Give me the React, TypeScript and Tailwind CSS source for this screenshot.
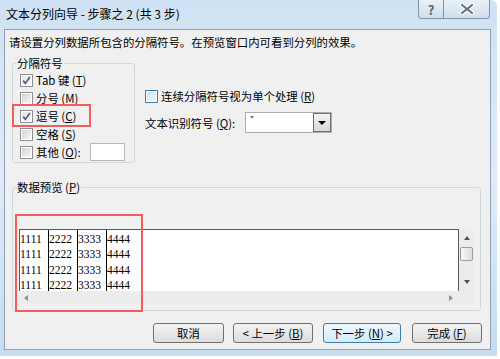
import React from 'react';

const Check = ({ checked, hot }: { checked?: boolean; hot?: boolean }) => (
  <span
    className={`w-[13px] h-[13px] shrink-0 border bg-white p-[1px] flex ${
      hot ? 'border-[#3c7fb1]' : 'border-[#8e8f8f]'
    }`}
  >
    <span
      className={`flex-1 flex items-center justify-center ${
        hot
          ? 'bg-linear-to-br from-[#c6e4f7] to-[#eef8fe]'
          : checked
          ? 'bg-linear-to-br from-[#e4e4e4] to-[#fcfcfc]'
          : 'bg-linear-to-br from-[#d3d3d3] to-[#f6f6f6]'
      }`}
    >
      {checked && (
        <svg width="9" height="9" viewBox="0 0 9 9">
          <path d="M1.2 4.6 L3.4 7.4 L7.8 1" fill="none" stroke="#4a5f97" strokeWidth="1.7" />
        </svg>
      )}
    </span>
  </span>
);

const Row = ({ checked, children }: { checked?: boolean; children: React.ReactNode }) => (
  <div className="h-[18px] flex items-center gap-[3px]">
    <Check checked={checked} />
    <span className="whitespace-nowrap">{children}</span>
  </div>
);

const Btn = ({ w, focus, children }: { w: string; focus?: boolean; children: React.ReactNode }) => (
  <div
    className={`${w} h-[20px] rounded-[3px] border flex items-center justify-center whitespace-nowrap ${
      focus
        ? 'border-[#3c7fb1] bg-linear-to-b from-[#eef7fd] to-[#d2ecfb]'
        : 'border-[#707070] bg-linear-to-b from-[#f4f4f4] to-[#dcdcdc]'
    }`}
  >
    {children}
  </div>
);

const data = ['1111', '2222', '3333', '4444'];

export default function App() {
  return (
    <div className="w-[500px] h-[359px] overflow-hidden bg-white font-['Noto_Sans_CJK_SC',sans-serif] text-[11.4px] leading-[14px] text-black">
      <div className="w-[497px] h-[356px] rounded-tr-[6px] bg-linear-to-b from-[#cfe2f3] via-[#dfebf6] to-[#c6dcef] flex flex-col">
        {/* title bar */}
        <div className="h-[29px] flex justify-between items-start">
          <div className="pl-[6px] pt-[7px] text-[12px] whitespace-pre">文本分列向导 - 步骤之 2 (共 3 步)</div>
          <div className="flex mr-[7px]">
            <div className="w-[26px] h-[19px] border border-t-0 border-[#8193a9] rounded-bl-[4px] bg-linear-to-b from-[#e9f1f8] to-[#cfdeed] flex items-center justify-center text-[13px] font-bold text-[#5f6670] leading-none">
              ?
            </div>
            <div className="w-[46px] h-[19px] border border-t-0 border-l-0 border-[#8193a9] rounded-br-[4px] bg-linear-to-b from-[#e9f1f8] to-[#cfdeed] flex items-center justify-center">
              <svg width="16" height="12" viewBox="0 0 16 12">
                <path d="M3 2 L13 10 M13 2 L3 10" stroke="#ffffff" strokeWidth="4.5" strokeLinecap="round" />
                <path d="M3 2 L13 10 M13 2 L3 10" stroke="#6a7078" strokeWidth="2.2" strokeLinecap="round" />
              </svg>
            </div>
          </div>
        </div>

        {/* client area */}
        <div className="ml-[4px] w-[487px] h-[321px] bg-[#f0f0f0] border border-[#8da2b8] flex flex-col">
          <div className="pt-[5px] pl-[4px] whitespace-nowrap">
            请设置分列数据所包含的分隔符号。在预览窗口内可看到分列的效果。
          </div>

          <div className="flex mt-[7px]">
            <fieldset className="ml-[7px] w-[123px] border border-[#d0d7dc] rounded-[3px] px-0 pb-[1px]">
              <legend className="ml-[3px] px-[1px] leading-[14px]">分隔符号</legend>
              <div className="pl-[7px] pt-[1px]">
                <Row checked>
                  Tab 键 (<u>T</u>)
                </Row>
                <Row>
                  分号 (<u>M</u>)
                </Row>
                <div className="relative">
                  <Row checked>
                    逗号 (<u>C</u>)
                  </Row>
                  <span className="absolute -left-[8px] -top-[3px] w-[79px] h-[23px] border-2 border-[#f25c5c]" />
                </div>
                <Row>
                  空格 (<u>S</u>)
                </Row>
                <div className="h-[18px] flex items-center">
                  <Check />
                  <span className="ml-[3px] whitespace-nowrap">
                    其他 (<u>O</u>):
                  </span>
                  <div className="ml-[9px] w-[35px] h-[18px] bg-white border border-[#b5b8bd]" />
                </div>
              </div>
            </fieldset>

            <div className="ml-[10px] pt-[31px] flex flex-col">
              <div className="h-[18px] flex items-center gap-[3px]">
                <Check hot />
                <span className="whitespace-nowrap">
                  连续分隔符号视为单个处理 (<u>R</u>)
                </span>
              </div>
              <div className="mt-[7px] h-[21px] flex items-center">
                <span className="whitespace-nowrap">
                  文本识别符号 (<u>Q</u>):
                </span>
                <div className="ml-[10px] w-[87px] h-[21px] bg-white border border-[#abadb3] flex">
                  <span className="flex-1 pl-[4px] font-['Liberation_Sans',sans-serif] text-[9px] leading-[12px]">"</span>
                  <div className="w-[18px] border border-[#707070] bg-linear-to-b from-[#f4f4f4] to-[#d9d9d9] flex items-center justify-center">
                    <span className="w-0 h-0 border-x-[4px] border-x-transparent border-t-[4px] border-t-black" />
                  </div>
                </div>
              </div>
            </div>
          </div>

          <fieldset className="mt-[17px] ml-[7px] w-[469px] border border-[#d0d7dc] rounded-[3px] px-0 pb-[6px]">
            <legend className="ml-[3px] px-[1px] leading-[14px]">
              数据预览 (<u>P</u>)
            </legend>
            <div className="mt-[35px] ml-[6px] relative w-[455px] h-[75px] flex flex-col">
              <div className="flex h-[62px]">
                <div className="w-[440px] bg-white border-t border-l border-r border-[#5a5a5a] flex font-['Liberation_Serif',serif] text-[11.5px] leading-[15.4px]">
                  {data.map((d, i) => (
                    <div
                      key={d}
                      className={`pt-[2px] ${i < 3 ? 'w-[29px] border-r border-black' : 'flex-1'}`}
                    >
                      {[0, 1, 2, 3].map((r) => (
                        <div key={r}>{d}</div>
                      ))}
                    </div>
                  ))}
                </div>
                <div className="w-[15px] bg-[#ececec] flex flex-col items-center pt-[7px] pb-[7px]">
                  <span className="w-0 h-0 border-x-[3.5px] border-x-transparent border-b-[4px] border-b-[#505050]" />
                  <span className="mt-[7px] w-[13px] h-[14px] rounded-[2px] border border-[#9a9a9a] bg-linear-to-r from-[#f6f6f6] to-[#dedede]" />
                  <span className="mt-auto w-0 h-0 border-x-[3.5px] border-x-transparent border-t-[4px] border-t-[#505050]" />
                </div>
              </div>
              <div className="h-[13px] bg-[#ececec] flex items-center justify-between pl-[5px] pr-[21px]">
                <span className="w-0 h-0 border-y-[3.5px] border-y-transparent border-r-[4px] border-r-[#909090]" />
                <span className="w-0 h-0 border-y-[3.5px] border-y-transparent border-l-[4px] border-l-[#909090]" />
              </div>
              <span className="absolute -left-[4px] -top-[15px] w-[128px] h-[98px] border-2 border-[#f25c5c]" />
            </div>
          </fieldset>

          <div className="mt-[12px] pl-[148px] flex">
            <Btn w="w-[71px]">取消</Btn>
            <div className="ml-[9px]">
              <Btn w="w-[80px]">
                &lt; 上一步 (<u>B</u>)
              </Btn>
            </div>
            <div className="ml-[10px]">
              <Btn w="w-[78px]" focus>
                下一步 (<u>N</u>) &gt;
              </Btn>
            </div>
            <div className="ml-[11px]">
              <Btn w="w-[70px]">
                完成 (<u>F</u>)
              </Btn>
            </div>
          </div>
        </div>
      </div>
    </div>
  );
}
